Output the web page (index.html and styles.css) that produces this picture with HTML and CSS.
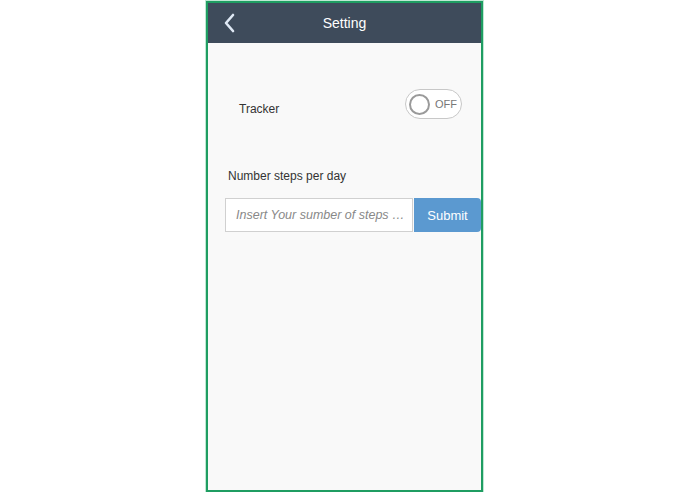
FILE: index.html
```html
<!DOCTYPE html>
<html>
<head>
<meta charset="utf-8">
<link rel="stylesheet" href="styles.css">
</head>
<body>
<div class="phone">
  <div class="header">
    <svg class="back" width="12" height="20" viewBox="0 0 12 20"><path d="M10 2 L3 10 L10 18" fill="none" stroke="#dfe9f5" stroke-width="2.6" stroke-linecap="round" stroke-linejoin="round"/></svg>
    <div class="title">Setting</div>
  </div>
  <div class="content">
    <div class="tracker-row">
      <span class="label">Tracker</span>
      <div class="toggle"><span class="knob"></span><span class="off">OFF</span></div>
    </div>
    <div class="steps-label">Number steps per day</div>
    <div class="input-row">
      <input class="steps-input" type="text" placeholder="Insert Your sumber of steps …">
      <button class="submit">Submit</button>
    </div>
  </div>
</div>
</body>
</html>
```
FILE: styles.css
```css
html, body { margin: 0; padding: 0; background: #ffffff; }
body { font-family: "Liberation Sans", Arial, sans-serif; }
.phone {
  margin: 1px 0 0 206px;
  width: 273px;
  height: 487px;
  border: 2px solid #1f9d62;
  box-shadow: 0 0 0 1px #bfe8d3;
  background: #f9f9f9;
  display: flex;
  flex-direction: column;
}
.header {
  height: 40px;
  background: #3e4b5b;
  display: flex;
  align-items: center;
  justify-content: center;
  position: relative;
}
.back { position: absolute; left: 15px; top: 10px; }
.title { color: #ffffff; font-size: 14px; }
.content { padding: 46px 0 0 17px; }
.tracker-row {
  display: flex;
  align-items: center;
  justify-content: space-between;
  padding: 0 19px 0 14px;
  height: 30px;
}
.label { font-size: 12px; color: #333; margin-top: 10px; }
.toggle {
  width: 55px;
  height: 28px;
  border: 1px solid #c8c8c8;
  border-radius: 15px;
  background: #fff;
  display: flex;
  align-items: center;
  box-sizing: content-box;
}
.knob {
  border: 2px solid #9a9a9a;
  border-radius: 50%;
  margin-left: 3px;
  box-sizing: border-box;
  width: 21px; height: 21px;
}
.off { font-size: 11px; color: #777; margin-left: 5px; }
.steps-label { font-size: 12px; color: #333; margin: 50px 0 0 3px; }
.input-row { display: flex; margin-top: 15px; }
.steps-input {
  width: 188px;
  height: 34px;
  box-sizing: border-box;
  border: 1px solid #d0d0d0;
  background: #fff;
  padding: 0 4px 0 10px;
  font-family: "Liberation Sans", Arial, sans-serif;
  font-size: 12.5px;
  font-style: italic;
  outline: none;
  text-overflow: ellipsis;
}
.steps-input::placeholder { color: #888; }
.submit {
  width: 67px;
  height: 34px;
  margin-left: 1px;
  border: none;
  border-radius: 0 4px 4px 0;
  background: #5b99d0;
  color: #fff;
  font-family: "Liberation Sans", Arial, sans-serif;
  font-size: 13px;
}
```
